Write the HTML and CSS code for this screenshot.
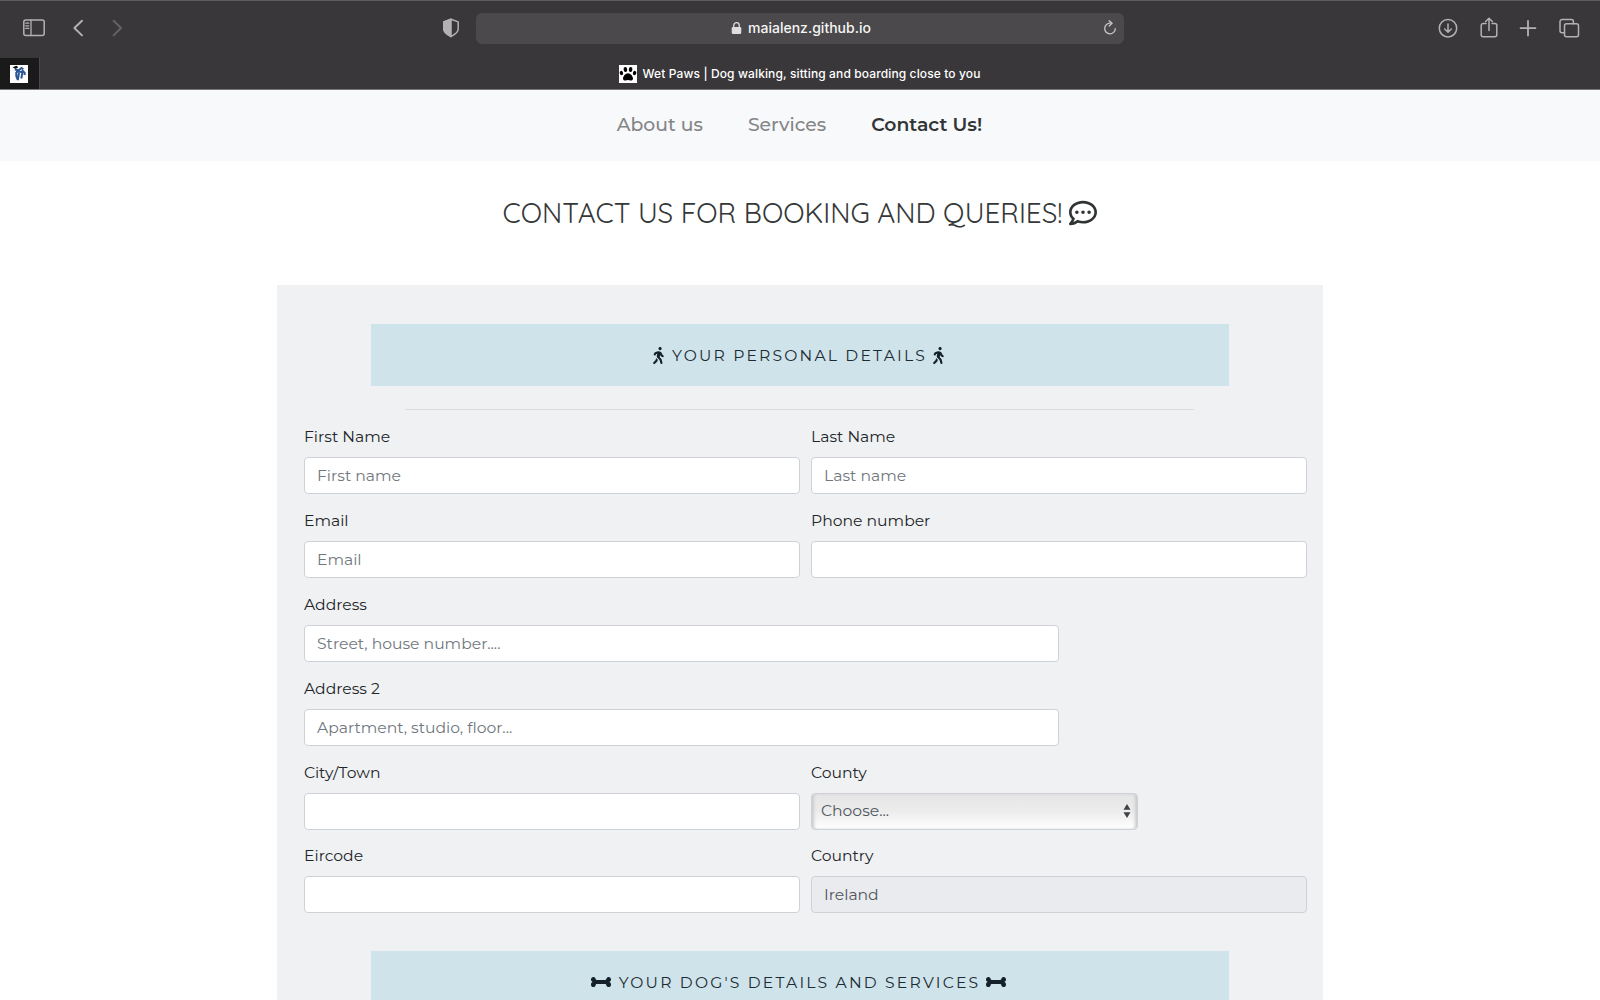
FILE: index.html
```html
<!DOCTYPE html>
<html lang="en">
<head>
<meta charset="utf-8">
<title>Wet Paws | Dog walking, sitting and boarding close to you</title>
<link rel="stylesheet" href="styles.css">
</head>
<body>
<svg width="0" height="0" class="sprite" aria-hidden="true">
  <symbol id="walking" viewBox="0 0 320 512"><path d="M208 96c26.5 0 48-21.5 48-48S234.5 0 208 0s-48 21.5-48 48 21.5 48 48 48zm94.5 149.1l-23.3-11.8-9.7-29.4c-14.7-44.6-55.7-75.8-102.2-75.9-36-.1-55.9 10.1-93.3 25.2-21.6 8.7-39.3 25.2-49.7 46.2L17.6 213c-7.8 15.8-1.5 35 14.2 42.9 15.6 7.9 34.6 1.5 42.5-14.3L81 228c3.5-7 9.3-12.5 16.5-15.4l26.8-10.8-15.2 60.7c-5.2 20.8.4 42.9 14.9 58.8l59.9 65.4c7.2 7.9 12.3 17.4 14.9 27.7l18.3 73.3c4.3 17.1 21.7 27.6 38.8 23.3 17.1-4.3 27.6-21.7 23.3-38.8l-22.2-89c-2.6-10.3-7.7-19.9-14.9-27.7l-45.5-49.7 17.2-68.7 5.5 16.5c5.3 16.1 16.7 29.4 31.7 37l23.3 11.8c15.6 7.9 34.6 1.5 42.5-14.3 7.7-15.7 1.4-35.1-14.3-43zM73.6 385.8c-3.2 8.1-8 15.4-14.2 21.5l-50 50.1c-12.5 12.5-12.5 32.8 0 45.3s32.7 12.5 45.2 0l59.4-59.4c6.1-6.1 10.9-13.4 14.2-21.5l13.5-33.8c-55.3-60.3-38.7-41.8-47.4-53.7l-20.7 51.5z"/></symbol>
  <symbol id="bone" viewBox="0 0 640 512"><path d="M598.88 244.56c25.2-12.6 41.12-38.36 41.12-66.53v-7.64C640 129.3 606.7 96 565.61 96c-32.02 0-60.44 20.49-70.57 50.86-7.68 23.03-11.6 45.14-38.11 45.14H183.06c-27.38 0-31.58-25.54-38.11-45.14C134.83 116.49 106.4 96 74.39 96 33.3 96 0 129.3 0 170.39v7.64c0 28.17 15.92 53.93 41.12 66.53 9.43 4.71 9.43 18.17 0 22.88C15.92 280.04 0 305.8 0 333.97v7.64C0 382.7 33.3 416 74.38 416c32.02 0 60.44-20.49 70.57-50.86 7.68-23.03 11.6-45.14 38.11-45.14h273.87c27.38 0 31.58 25.54 38.11 45.14C505.17 395.51 533.6 416 565.61 416c41.08 0 74.38-33.3 74.38-74.39v-7.64c0-28.18-15.92-53.93-41.12-66.53-9.42-4.71-9.42-18.17.01-22.88z"/></symbol>
</svg>

<header class="browser">
  <div class="toolbar">
    <div class="tools-left">
      <svg class="tool" viewBox="0 0 24 24"><rect x="1.8" y="4" width="20.4" height="15.6" rx="2"/><path d="M9 4v15.6M3.8 7.2h3M3.8 9.8h3M3.8 12.4h3" stroke-width="1.3"/></svg>
      <svg class="tool back" viewBox="0 0 24 24"><path d="M16 4.8L8.4 12l7.6 7.4" stroke-width="2"/></svg>
      <svg class="tool forward" viewBox="0 0 24 24"><path d="M8.6 4.8L16 12l-7.4 7.4" stroke-width="2"/></svg>
      <svg class="tool shield" viewBox="0 0 24 24"><path d="M12 3.2l7.2 2.7v7.2c0 3.5-3.5 5.6-7.2 7.5-3.7-1.9-7.2-4-7.2-7.5V5.9z"/><path class="solid" d="M12 3.2v17.4c-3.7-1.9-7.2-4-7.2-7.5V5.9z"/></svg>
    </div>
    <div class="address-bar">
      <div class="site">
        <svg class="lock" viewBox="0 0 12 14"><rect x=".8" y="6" width="10.4" height="7.5" rx="1.4" fill="#dededf"/><path d="M3 6.5V4.2a3 3 0 0 1 6 0v2.3" fill="none" stroke="#dededf" stroke-width="1.4"/></svg>
        <span class="url">maialenz.github.io</span>
      </div>
      <svg class="reload" viewBox="0 0 14 16"><path d="M7 3.2a5.3 5.3 0 1 0 5.3 5.5M6.2.8L9 3.3 6.2 6"/></svg>
    </div>
    <div class="tools-right">
      <svg class="tool" viewBox="0 0 24 24"><circle cx="12" cy="12.2" r="8.7"/><path d="M12 8v8M8.7 13l3.3 3.3 3.3-3.3"/></svg>
      <svg class="tool share" viewBox="0 0 24 24"><path d="M9 7.4H6.2a2 2 0 0 0-2 2v9.4a2 2 0 0 0 2 2h11.6a2 2 0 0 0 2-2V9.4a2 2 0 0 0-2-2H15M12 14.5V2.4M8.6 5.5L12 2.2l3.4 3.3"/></svg>
      <svg class="tool plus" viewBox="0 0 24 24"><path d="M12 4.8v14.8M4.6 12.2h14.8" stroke-width="1.8"/></svg>
      <svg class="tool tabs-icon" viewBox="0 0 24 24"><rect x="7.5" y="7.8" width="14" height="13" rx="2"/><path d="M7.5 16.7H5a2 2 0 0 1-2-2V5.600a2 2 0 0 1 2-2h9.400a2 2 0 0 1 2 2v2.200"/></svg>
    </div>
  </div>
  <div class="tabs">
    <div class="pinned-tab">
      <svg class="favicon" viewBox="0 0 18 18"><path d="M0 0h18v18H0z" fill="#fff"/><path d="M2.500 2.300L6.500.8l1.800 1.400L5.500 4z" fill="#111"/><path d="M4.800 4.500l4 .8L11.500 3l1.800 1.300M6 6.500l6 .5M6.300 7v4l1.500 4M9 8l-1.200 7M12 5l2.800 3-.3 2M12.500 7l-1.200 6.500" fill="none" stroke="#2a5797" stroke-width="2"/></svg>
    </div>
    <div class="active-tab">
      <svg class="favicon" viewBox="0 0 18 18"><path d="M0 0h18v18H0z" fill="#fff"/><ellipse cx="2.4" cy="8" rx="1.7" ry="2.2" transform="rotate(-18 2.4 8)"/><ellipse cx="6.400" cy="4.500" rx="1.800" ry="2.500" transform="rotate(-8 6.400 4.500)"/><ellipse cx="11.600" cy="4.500" rx="1.800" ry="2.500" transform="rotate(8 11.600 4.500)"/><ellipse cx="15.600" cy="8" rx="1.700" ry="2.200" transform="rotate(18 15.600 8)"/><path d="M9 8.200c2.700 0 5 3.200 5 5.400 0 1.500-1.100 2-2.300 2-1 0-1.700-.5-2.700-.5s-1.700.5-2.700.5c-1.200 0-2.300-.5-2.300-2 0-2.200 2.300-5.400 5-5.400z"/></svg>
      <span>Wet Paws | Dog walking, sitting and boarding close to you</span>
    </div>
  </div>
</header>

<nav class="site-nav">
  <a>About us</a>
  <a>Services</a>
  <a class="current">Contact Us!</a>
</nav>

<main>
  <h1>
    <span>CONTACT US FOR BOOKING AND QUERIES!</span>
    <svg class="comment" viewBox="0 0 512 512"><path d="M144 208c-17.700 0-32 14.300-32 32s14.300 32 32 32 32-14.300 32-32-14.300-32-32-32zm112 0c-17.700 0-32 14.300-32 32s14.300 32 32 32 32-14.300 32-32-14.300-32-32-32zm112 0c-17.700 0-32 14.300-32 32s14.300 32 32 32 32-14.300 32-32-14.300-32-32-32zM256 32C114.600 32 0 125.100 0 240c0 47.600 19.900 91.200 52.900 126.300C38 405.700 7 439.100 6.500 439.500c-6.600 7-8.400 17.200-4.600 26S14.400 480 24 480c61.500 0 110-25.700 139.100-46.300C192 442.800 223.200 448 256 448c141.400 0 256-93.100 256-208S397.400 32 256 32zm0 368c-26.700 0-53.100-4.100-78.400-12.100l-22.700-7.200-19.500 13.800c-14.300 10.100-33.900 21.400-57.500 29 7.300-12.100 14.400-25.700 19.900-40.200l10.600-28.100-20.600-21.800C69.700 314.100 48 282.200 48 240c0-88.200 93.300-160 208-160s208 71.800 208 160-93.300 160-208 160z"/></svg>
  </h1>

  <form class="booking">
    <h2 class="banner">
      <svg class="walker"><use href="#walking"/></svg>
      <span>YOUR PERSONAL DETAILS</span>
      <svg class="walker"><use href="#walking"/></svg>
    </h2>
    <hr>
    <div class="fields">
      <label class="field"><span>First Name</span><input type="text" placeholder="First name"></label>
      <label class="field"><span>Last Name</span><input type="text" placeholder="Last name"></label>
      <label class="field"><span>Email</span><input type="text" placeholder="Email"></label>
      <label class="field"><span>Phone number</span><input type="text"></label>
      <label class="field long"><span>Address</span><input type="text" placeholder="Street, house number...."></label>
      <label class="field long"><span>Address 2</span><input type="text" placeholder="Apartment, studio, floor..."></label>
      <label class="field"><span>City/Town</span><input type="text"></label>
      <label class="field county"><span>County</span>
        <span class="select"><span>Choose...</span><svg viewBox="0 0 8 14"><path d="M4 0l3.500 5.700h-7zM4 14L.5 8.300h7z"/></svg></span>
      </label>
      <label class="field"><span>Eircode</span><input type="text"></label>
      <label class="field"><span>Country</span><input type="text" value="Ireland" readonly></label>
    </div>
    <h2 class="banner">
      <svg class="bone"><use href="#bone"/></svg>
      <span>YOUR DOG'S DETAILS AND SERVICES</span>
      <svg class="bone"><use href="#bone"/></svg>
    </h2>
  </form>
</main>
</body>
</html>
```
FILE: styles.css
```css
* { box-sizing: border-box; }

body {
  margin: 0;
  height: 1000px;
  overflow: hidden;
  background: #fff;
  color: #212529;
  font-family: Montserrat, Inter, "Open Sans", sans-serif;
}

.sprite { display: block; }

/* Browser chrome */
.browser {
  height: 90px;
  background: #3a373a;
  border-top: 1px solid #5e5c5e;
  border-bottom: 1px solid #777577;
}

.toolbar {
  display: grid;
  grid-template-columns: 476px 648px 476px;
  align-items: center;
  height: 54px;
  margin-bottom: 3px;
}

.tools-left,
.tools-right {
  display: flex;
  align-items: center;
}

.tools-left { padding: 0 13px 0 22px; }
.tools-right { justify-content: flex-end; padding-right: 19px; }

.tool {
  width: 24px;
  height: 24px;
  fill: none;
  stroke: #b3b1b3;
  stroke-width: 1.5;
  stroke-linecap: round;
  stroke-linejoin: round;
}

.solid { fill: #b3b1b3; }
.back { margin-left: 20px; }
.forward { margin-left: 15px; stroke: #656365; }
.shield { margin-left: auto; }
.share { margin-left: 17px; }
.plus { margin-left: 15px; }
.tabs-icon { margin-left: 17px; }

.address-bar {
  display: grid;
  grid-template-columns: 1fr 14px;
  align-items: center;
  height: 31px;
  padding-right: 7px;
  border-radius: 6px;
  background: #4b494b;
  color: #f5f5f5;
}

.site {
  display: flex;
  justify-content: center;
  align-items: center;
  gap: 6px;
  padding-left: 23px;
}

.lock { width: 11px; height: 14px; }
.url { font: 500 14px/20px Inter, sans-serif; }
.reload { width: 14px; height: 16px; fill: none; stroke: #c9c7c9; stroke-width: 1.3; stroke-linecap: round; }

.tabs {
  display: grid;
  grid-template-columns: 40px 1fr 40px;
  height: 31px;
}

.pinned-tab {
  display: flex;
  align-items: center;
  padding-left: 10px;
  background: #1b1a1b;
  border-right: 1px solid #4a484a;
}

.active-tab {
  display: flex;
  justify-content: center;
  align-items: center;
  gap: 5px;
  color: #fff;
  font: 500 12px/18px Inter, sans-serif;
  letter-spacing: 0.12px;
}

.favicon { width: 18px; height: 18px; }

/* Site navigation */
.site-nav {
  display: flex;
  justify-content: center;
  gap: 45px;
  height: 71px;
  padding: 20px 1px 0 0;
  background: #f8f9fb;
  color: #858687;
  font-size: 18.8px;
  font-weight: 500;
  line-height: 29px;
}

.current { color: #323435; font-weight: 600; }

h1 {
  display: flex;
  justify-content: center;
  align-items: center;
  gap: 7px;
  height: 36px;
  margin: 34px 0 54px;
  color: #343738;
  font: 400 27.8px/36px Quicksand, Lato, sans-serif;
}

.comment { width: 28px; height: 28px; fill: #303334; }

/* Booking form */
.booking {
  width: 1046px;
  height: 760px;
  margin: 0 auto;
  padding: 39px 16px 0 27px;
  background: #f0f1f3;
}

.banner {
  display: flex;
  justify-content: center;
  align-items: center;
  gap: 8px;
  width: 858px;
  height: 62px;
  margin: 0 0 0 67px;
  padding-right: 3px;
  background: #cfe3ea;
  color: #1d2b33;
  font-size: 15.6px;
  font-weight: 400;
  letter-spacing: 2.18px;
}

.banner span { margin-right: -2px; }
.walker { width: 11px; height: 17px; fill: #14202a; }
.bone { width: 20px; height: 16px; fill: #14202a; }

hr {
  width: 789px;
  height: 1px;
  margin: 23px 0 15px 101px;
  border: 0;
  background: #dadcdf;
}

.fields {
  display: grid;
  grid-template-columns: 495.5px 495.5px;
  column-gap: 11.5px;
  row-gap: 14.9px;
  margin-bottom: 38px;
}

.field {
  display: flex;
  flex-direction: column;
  gap: 8px;
  height: 69px;
  font-size: 15.6px;
  line-height: 24px;
}

.long { grid-column: 1 / -1; width: 755px; }
.county { width: 327px; }

input {
  width: 100%;
  height: 37px;
  padding: 0 12px;
  border: 1px solid #ced2d7;
  border-radius: 4px;
  background: #fff;
  color: #50565d;
  font: inherit;
}

input::placeholder { color: #70777d; opacity: 1; }
input[readonly] { background: #e9ebee; }

.select {
  display: flex;
  justify-content: space-between;
  align-items: center;
  height: 37px;
  padding: 0 6px 0 9px;
  border: 1px solid #ced2d7;
  border-radius: 4px;
  background: linear-gradient(#e6e6e6, #ececec 50%, #fff);
  box-shadow: inset 3px 0 3px -1px #c9cccf, inset -3px 0 3px -1px #c9cccf;
  color: #50565d;
}

.select svg { width: 8px; height: 14px; fill: #3e4347; }
```
